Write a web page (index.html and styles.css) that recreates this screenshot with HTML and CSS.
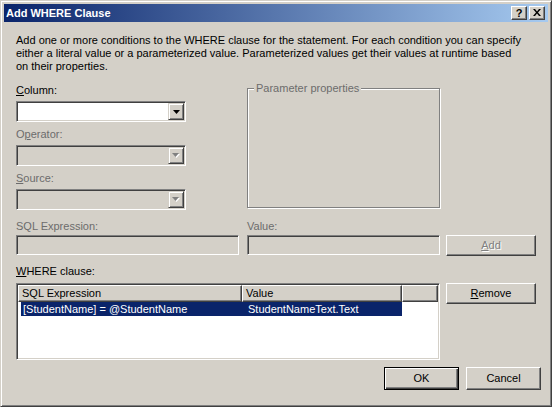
FILE: index.html
```html
<!DOCTYPE html>
<html>
<head>
<meta charset="utf-8">
<title>Add WHERE Clause</title>
<link rel="stylesheet" href="styles.css">
</head>
<body>
<div class="window">
  <div class="titlebar">
    <span class="title">Add WHERE Clause</span>
    <span class="capbtn help">?</span>
    <span class="capbtn close"><svg width="8" height="7" viewBox="0 0 8 7"><path d="M0 0h2l2 2.5L6 0h2L5 3.5 8 7H6L4 4.5 2 7H0l3-3.5z" fill="#000"/></svg></span>
  </div>
  <div class="content">
    <p class="desc">Add one or more conditions to the WHERE clause for the statement. For each condition you can specify<br>either a literal value or a parameterized value. Parameterized values get their values at runtime based<br>on their properties.</p>
    <div class="upper">
      <div class="fields">
        <div class="lbl"><u>C</u>olumn:</div>
        <div class="combo"><span class="dd"><svg width="7" height="4" viewBox="0 0 7 4"><path d="M0 0h7L3.5 4z" fill="#000"/></svg></span></div>
        <div class="lbl gap dis">O<u>p</u>erator:</div>
        <div class="combo disabled"><span class="dd"><svg width="8" height="5" viewBox="0 0 8 5"><path d="M1 1h7L4.5 5z" fill="#fff"/><path d="M0 0h7L3.5 4z" fill="#808080"/></svg></span></div>
        <div class="lbl gap dis"><u>S</u>ource:</div>
        <div class="combo disabled"><span class="dd"><svg width="8" height="5" viewBox="0 0 8 5"><path d="M1 1h7L4.5 5z" fill="#fff"/><path d="M0 0h7L3.5 4z" fill="#808080"/></svg></span></div>
      </div>
      <div class="group"><span class="legend">Parameter properties</span></div>
    </div>
    <div class="expr">
      <div class="fcol sqlcol">
        <div class="lbl dis">SQL Expression:</div>
        <div class="textbox"></div>
      </div>
      <div class="fcol valcol">
        <div class="lbl dis">Value:</div>
        <div class="textbox"></div>
      </div>
      <button class="btn side add" disabled><u>A</u>dd</button>
    </div>
    <div class="lbl where-lbl"><u>W</u>HERE clause:</div>
    <div class="listrow">
      <div class="listview">
        <div class="lvhead">
          <div class="hcell c1">SQL Expression</div>
          <div class="hcell c2">Value</div>
          <div class="hcell c3"></div>
        </div>
        <div class="lvrow sel">
          <div class="rcell r1">[StudentName] = @StudentName</div>
          <div class="rcell r2">StudentNameText.Text</div>
        </div>
      </div>
      <button class="btn side remove"><u>R</u>emove</button>
    </div>
    <div class="footer">
      <button class="btn dlg default">OK</button>
      <button class="btn dlg">Cancel</button>
    </div>
  </div>
</div>
</body>
</html>
```

FILE: styles.css
```css
* { box-sizing: border-box; }
html, body { margin: 0; padding: 0; }
body {
  width: 552px;
  height: 407px;
  overflow: hidden;
  background: #D4D0C8;
  font-family: "Liberation Sans", Arial, sans-serif;
  font-size: 11px;
  line-height: 13px;
  color: #000;
}

.window {
  width: 552px;
  height: 407px;
  background: #D4D0C8;
  border: 1px solid;
  border-color: #D4D0C8 #404040 #404040 #D4D0C8;
  box-shadow: inset 1px 1px #fff, inset -1px -1px #808080;
  padding: 3px;
  display: flex;
  flex-direction: column;
}

.titlebar {
  height: 18px;
  flex: none;
  background: linear-gradient(to right, #0A246A, #A6CAF0);
  display: flex;
  align-items: center;
  padding: 0 3px 0 2px;
}
.title {
  flex: 1;
  color: #fff;
  font-weight: bold;
  white-space: nowrap;
}
.capbtn {
  width: 16px;
  height: 14px;
  background: #D4D0C8;
  border: 1px solid;
  border-color: #fff #404040 #404040 #fff;
  box-shadow: inset -1px -1px #808080;
  display: flex;
  align-items: center;
  justify-content: center;
}
.help {
  font-weight: bold;
  font-size: 11px;
  line-height: 12px;
  padding-bottom: 1px;
}
.close { margin-left: 2px; }
.close svg { display: block; margin-top: -1px; margin-left: -1px; }

.content {
  flex: 1;
  padding: 12px 0 0 12px;
  display: flex;
  flex-direction: column;
}

.desc {
  margin: 0;
  white-space: nowrap;
}

.lbl { white-space: nowrap; }
.dis { color: #6c6c6c; }

.upper {
  display: flex;
  margin-top: 11px;
}
.fields {
  width: 170px;
  display: flex;
  flex-direction: column;
}
.lbl.gap { margin-top: 6px; }

.combo {
  margin-top: 4px;
  height: 21px;
  background: #fff;
  border: 1px solid;
  border-color: #808080 #fff #fff #808080;
  box-shadow: inset 1px 1px #404040, inset -1px -1px #D4D0C8;
  padding: 1px;
  display: flex;
  justify-content: flex-end;
}
.combo.disabled { background: #D4D0C8; }
.dd {
  width: 16px;
  height: 17px;
  background: #D4D0C8;
  border: 1px solid;
  border-color: #D4D0C8 #404040 #404040 #D4D0C8;
  box-shadow: inset 1px 1px #fff, inset -1px -1px #808080;
  display: flex;
  align-items: center;
  justify-content: center;
}
.dd svg { display: block; margin-left: 0; }

.group {
  margin-left: 61px;
  margin-top: 4px;
  width: 193px;
  height: 120px;
  border: 1px solid #808080;
  box-shadow: inset 1px 1px #fff, 1px 1px #fff;
  display: flex;
  flex-direction: column;
  align-items: flex-start;
}
.legend {
  margin: -7px 0 0 6px;
  padding: 0 2px;
  background: #D4D0C8;
  color: #6c6c6c;
  white-space: nowrap;
}

.expr {
  display: flex;
  margin-top: 10px;
}
.fcol { display: flex; flex-direction: column; }
.sqlcol { width: 223px; }
.valcol { width: 193px; margin-left: 8px; }
.textbox {
  margin-top: 2px;
  height: 20px;
  background: #D4D0C8;
  border: 1px solid;
  border-color: #808080 #fff #fff #808080;
  box-shadow: inset 1px 1px #404040, inset -1px -1px #D4D0C8;
}

.btn {
  font: inherit;
  line-height: 13px;
  color: #000;
  background: #D4D0C8;
  border: 1px solid;
  border-color: #fff #404040 #404040 #fff;
  box-shadow: inset -1px -1px #808080;
  padding: 0;
  margin: 0;
  text-align: center;
}
.btn:disabled {
  color: #808080;
  text-shadow: 1px 1px #fff;
}
.side {
  width: 90px;
  height: 21px;
  margin-left: 6px;
}
.add { margin-top: 15px; }

.where-lbl { margin-top: 9px; }

.listrow {
  display: flex;
  margin-top: 5px;
}
.listview {
  width: 424px;
  height: 77px;
  background: #fff;
  border: 1px solid;
  border-color: #808080 #fff #fff #808080;
  box-shadow: inset 1px 1px #404040, inset -1px -1px #D4D0C8;
  padding: 1px;
}
.lvhead {
  display: flex;
  height: 17px;
}
.hcell {
  height: 17px;
  background: #D4D0C8;
  border: 1px solid;
  border-color: #fff #404040 #404040 #fff;
  box-shadow: inset -1px -1px #808080;
  line-height: 15px;
  padding-left: 3px;
  white-space: nowrap;
  overflow: hidden;
}
.c1 { width: 224px; }
.c2 { width: 160px; }
.c3 { flex: 1; }

.lvrow {
  display: flex;
  height: 14px;
  line-height: 14px;
  margin-left: 3px;
  width: 381px;
}
.lvrow.sel { background: #0A246A; color: #fff; }
.rcell { white-space: nowrap; overflow: hidden; }
.r1 { width: 221px; padding-left: 2px; }
.r2 { width: 160px; padding-left: 6px; }

.footer {
  display: flex;
  justify-content: flex-end;
  margin-top: 7px;
  padding-right: 7px;
  gap: 7px;
}
.dlg {
  width: 75px;
  height: 23px;
}
.btn.default {
  border: 1px solid #000;
  box-shadow: inset 1px 1px #fff, inset -1px -1px #404040, inset -2px -2px #808080;
}
```
